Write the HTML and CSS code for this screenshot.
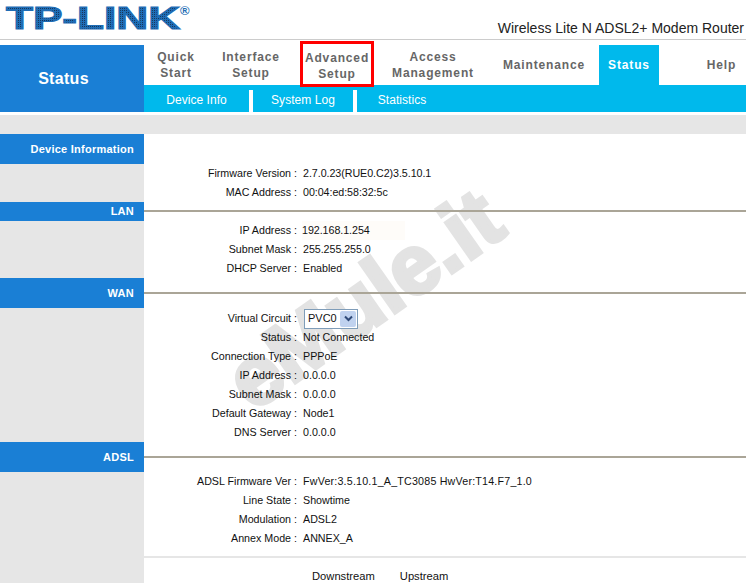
FILE: index.html
```html
<!DOCTYPE html>
<html lang="en">
<head>
<meta charset="utf-8">
<title>Status</title>
<link rel="stylesheet" href="styles.css">
</head>
<body>
<div class="page">
  <header class="brand">
    <svg class="logo" width="200" height="39" viewBox="0 0 200 39">
      <defs>
        <pattern id="dots" width="2" height="2" patternUnits="userSpaceOnUse">
          <rect width="2" height="2" fill="#1f6db5"/>
          <rect width="1" height="1" fill="#17365c"/>
        </pattern>
      </defs>
      <text x="6" y="29" class="logo-text" fill="url(#dots)" textLength="174" lengthAdjust="spacingAndGlyphs">TP-LINK</text>
      <text x="180" y="15" class="logo-reg">®</text>
    </svg>
    <div class="model">Wireless Lite N ADSL2+ Modem Router</div>
  </header>
  <nav class="nav">
    <div class="nav-title">Status</div>
    <div class="nav-main">
      <div class="tabs">
        <a class="tab tab-quick">Quick<br>Start</a>
        <a class="tab tab-iface">Interface<br>Setup</a>
        <a class="tab tab-adv">Advanced<br>Setup</a>
        <a class="tab tab-access">Access<br>Management</a>
        <a class="tab tab-maint">Maintenance</a>
        <a class="tab tab-status">Status</a>
        <a class="tab tab-help">Help</a>
      </div>
      <div class="subtabs">
        <a class="subtab sub-info">Device Info</a>
        <span class="sub-sep"></span>
        <a class="subtab sub-log">System Log</a>
        <span class="sub-sep"></span>
        <a class="subtab sub-stats">Statistics</a>
      </div>
    </div>
  </nav>
  <div class="band"></div>
  <main class="body">
    <div class="watermark">eMule.it</div>

    <section class="section sec-device">
      <h2 class="sec-head head-tall">Device Information</h2>
      <div class="rows rows-device">
        <div class="row"><span class="k">Firmware Version :</span><span class="v v-num">2.7.0.23(RUE0.C2)3.5.10.1</span></div>
        <div class="row"><span class="k">MAC Address :</span><span class="v v-num">00:04:ed:58:32:5c</span></div>
      </div>
    </section>

    <section class="section sec-lan">
      <h2 class="sec-head head-short">LAN</h2>
      <div class="rule rule-short"></div>
      <div class="rows rows-lan">
        <div class="row"><span class="k">IP Address :</span><span class="v v-num v-ip">192.168.1.254</span></div>
        <div class="row"><span class="k">Subnet Mask :</span><span class="v v-num">255.255.255.0</span></div>
        <div class="row"><span class="k">DHCP Server :</span><span class="v">Enabled</span></div>
      </div>
    </section>

    <section class="section sec-wan">
      <h2 class="sec-head head-tall">WAN</h2>
      <div class="rule rule-tall"></div>
      <div class="rows rows-wan">
        <div class="row"><span class="k">Virtual Circuit :</span><span class="v"><span class="select">PVC0<span class="select-btn"><svg width="9" height="7" viewBox="0 0 9 7"><path d="M1 1.5 L4.5 5 L8 1.5" fill="none" stroke="#2f4a78" stroke-width="2"/></svg></span></span></span></div>
        <div class="row"><span class="k">Status :</span><span class="v">Not Connected</span></div>
        <div class="row"><span class="k">Connection Type :</span><span class="v">PPPoE</span></div>
        <div class="row"><span class="k">IP Address :</span><span class="v">0.0.0.0</span></div>
        <div class="row"><span class="k">Subnet Mask :</span><span class="v">0.0.0.0</span></div>
        <div class="row"><span class="k">Default Gateway :</span><span class="v">Node1</span></div>
        <div class="row"><span class="k">DNS Server :</span><span class="v">0.0.0.0</span></div>
      </div>
    </section>

    <section class="section sec-adsl">
      <h2 class="sec-head head-tall">ADSL</h2>
      <div class="rule rule-tall"></div>
      <div class="rows rows-adsl">
        <div class="row"><span class="k">ADSL Firmware Ver :</span><span class="v v-wide">FwVer:3.5.10.1_A_TC3085 HwVer:T14.F7_1.0</span></div>
        <div class="row"><span class="k">Line State :</span><span class="v">Showtime</span></div>
        <div class="row"><span class="k">Modulation :</span><span class="v">ADSL2</span></div>
        <div class="row"><span class="k">Annex Mode :</span><span class="v">ANNEX_A</span></div>
      </div>
      <div class="thin-rule"></div>
      <div class="stream"><span class="down">Downstream</span><span class="up">Upstream</span></div>
    </section>
  </main>
</div>
</body>
</html>
```
FILE: styles.css
```css
html, body { margin: 0; padding: 0; background: #fff; }
body { font-family: "Liberation Sans", Arial, sans-serif; font-size: 10.7px; color: #111; overflow: hidden; }
.page { width: 746px; height: 583px; overflow: hidden; }

.brand { height: 39px; position: relative; border-bottom: 1px solid #ccc; }
.logo { position: absolute; left: 0; top: 0; }
.logo-text { font-family: "Liberation Sans", Arial, sans-serif; font-weight: 700; font-size: 31px; stroke: #1f6db5; stroke-width: 1.2px; }
.logo-reg { font-family: "Liberation Sans", Arial, sans-serif; font-size: 13px; font-weight: 700; fill: #1f6db5; }
.model { position: absolute; right: 2px; bottom: 3px; font-size: 14px; line-height: 16px; color: #222; white-space: nowrap; }

.nav { display: flex; margin-top: 5px; height: 67px; }
.nav-title { width: 144px; box-sizing: border-box; padding-right: 17px; background: #1a7fd5; color: #fff; font-weight: 700; font-size: 16px; display: flex; align-items: center; justify-content: center; letter-spacing: .3px; }
.nav-main { flex: 1; display: flex; flex-direction: column; }
.tabs { display: flex; height: 40px; }
.tab { display: flex; align-items: center; justify-content: center; text-align: center; font-weight: 700; font-size: 12px; line-height: 16px; letter-spacing: .85px; color: #666; box-sizing: border-box; }
.tab-quick { width: 64px; }
.tab-iface { width: 86px; }
.tab-adv { width: 74px; margin-left: 6px; outline: 3px solid #f00; outline-offset: -3px; height: 46px; margin-top: -4px; padding-top: 4px; position: relative; z-index: 2; }
.tab-access { width: 118px; }
.tab-maint { width: 107px; padding-right: 3px; }
.tab-status { width: 60px; background: #00b9ec; color: #fff; }
.tab-help { width: 87px; padding-left: 38px; }
.subtabs { display: flex; height: 27px; background: #00b9ec; }
.subtab { display: flex; align-items: center; justify-content: center; color: #fff; font-size: 12px; letter-spacing: .05px; padding-top: 3px; box-sizing: border-box; }
.sub-sep { width: 4px; height: 22px; align-self: flex-end; background: #fff; }
.sub-info { width: 105px; }
.sub-log { width: 100px; }
.sub-stats { width: 90px; }

.band { height: 19px; margin-top: 3px; background: #e6e6e6; }

.body { position: relative; background: linear-gradient(to right, #e6e6e6 144px, #fff 144px); height: 449px; }
.watermark { position: absolute; left: 189px; top: 123px; width: 350px; text-align: center; font-size: 84px; line-height: 84px; font-weight: 700; color: #e3e3e3; -webkit-text-stroke: 4px #e3e3e3; transform: rotate(-35deg); white-space: nowrap; }

.section { position: relative; }
.sec-head { width: 144px; margin: 0; background: #1a7fd5; color: #fff; font-size: 11px; font-weight: 700; text-align: right; box-sizing: border-box; padding-right: 10px; letter-spacing: .25px; }
.head-tall { height: 30px; line-height: 30px; }
.head-short { height: 19px; line-height: 19px; }
.rule { position: absolute; left: 144px; right: 0; height: 2px; background: #aaa597; }
.rule-tall { top: 14px; }
.rule-short { top: 8px; }

.rows { position: relative; }
.row { display: flex; height: 19px; line-height: 19px; align-items: center; }
.k { width: 297px; text-align: right; flex: none; white-space: nowrap; }
.v { margin-left: 6px; white-space: nowrap; }
.v-num { letter-spacing: -.05px; }
.v-wide { letter-spacing: .2px; }
.v-ip { margin-left: 5px; padding-right: 35px; background: #fefcf9; }

.sec-device { height: 68px; }
.sec-lan { height: 76px; }
.sec-wan { height: 164px; }
.rows-wan { margin-top: 1px; }

.select { display: inline-flex; align-items: center; justify-content: space-between; box-sizing: border-box; width: 54px; height: 20px; margin-left: 1px; border: 1px solid #7f9db9; padding-left: 3px; padding-right: 1px; background: #fff; font-size: 11px; }
.select-btn { width: 16px; height: 16px; background: #c0d2ef; border-radius: 2px; display: flex; align-items: center; justify-content: center; }

.thin-rule { margin: 8px 0 0 144px; height: 2px; background: #e6e6e6; }
.stream { display: flex; height: 19px; line-height: 19px; margin-top: 9px; font-size: 11.2px; }
.down { margin-left: 312px; }
.up { margin-left: 25px; }
```
